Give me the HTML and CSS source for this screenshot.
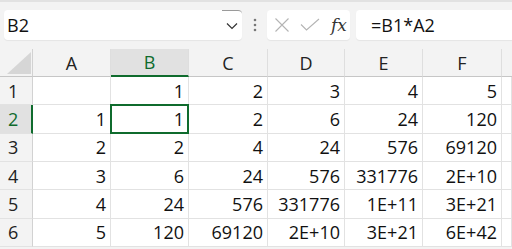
FILE: index.html
```html
<!DOCTYPE html>
<html lang="en">
<head>
  <meta charset="UTF-8" />
  <meta name="viewport" content="width=device-width, initial-scale=1.0"/>
  <title>Sheet</title>
  <link rel="stylesheet" href="styles.css">
</head>
<body>

  <div class="toolbar">
    <div class="namebox">
      <span class="name">B2</span>
      <span class="drop">
        <svg width="12" height="8" viewBox="0 0 12 8"><path d="M1 1.5 L6 6.5 L11 1.5" fill="none" stroke="#333" stroke-width="1.2"/></svg>
      </span>
    </div>
    <div class="dots">
      <svg width="4" height="14" viewBox="0 0 4 14"><circle cx="2" cy="2" r="1.3" fill="#777"/><circle cx="2" cy="7" r="1.3" fill="#777"/><circle cx="2" cy="12" r="1.3" fill="#777"/></svg>
    </div>
    <div class="funcs">
      <svg class="ico" width="16" height="16" viewBox="0 0 16 16"><path d="M1.5 1.5 L14.5 14.5 M14.5 1.5 L1.5 14.5" stroke="#b4b4b4" stroke-width="1.1"/></svg>
      <svg class="ico" width="20" height="14" viewBox="0 0 20 14"><path d="M1 6.5 L6.5 12 L19 1" fill="none" stroke="#b4b4b4" stroke-width="1.1"/></svg>
      <span class="fx">fx</span>
    </div>
    <div class="formula">=B1*A2</div>
  </div>

  <div class="grid">
    <div class="corner"><span class="tri"></span></div>
    <div class="colhead">A</div>
    <div class="colhead active">B</div>
    <div class="colhead">C</div>
    <div class="colhead">D</div>
    <div class="colhead">E</div>
    <div class="colhead">F</div>
    <div class="colhead last"></div>

    <div class="rowhead">1</div>
    <div class="cell"></div><div class="cell">1</div><div class="cell">2</div><div class="cell">3</div><div class="cell">4</div><div class="cell">5</div><div class="cell"></div>

    <div class="rowhead active">2</div>
    <div class="cell">1</div><div class="cell selected">1</div><div class="cell">2</div><div class="cell">6</div><div class="cell">24</div><div class="cell">120</div><div class="cell"></div>

    <div class="rowhead">3</div>
    <div class="cell">2</div><div class="cell">2</div><div class="cell">4</div><div class="cell">24</div><div class="cell">576</div><div class="cell">69120</div><div class="cell"></div>

    <div class="rowhead">4</div>
    <div class="cell">3</div><div class="cell">6</div><div class="cell">24</div><div class="cell">576</div><div class="cell">331776</div><div class="cell">2E+10</div><div class="cell"></div>

    <div class="rowhead">5</div>
    <div class="cell">4</div><div class="cell">24</div><div class="cell">576</div><div class="cell">331776</div><div class="cell">1E+11</div><div class="cell">3E+21</div><div class="cell"></div>

    <div class="rowhead">6</div>
    <div class="cell">5</div><div class="cell">120</div><div class="cell">69120</div><div class="cell">2E+10</div><div class="cell">3E+21</div><div class="cell">6E+42</div><div class="cell"></div>
  </div>

</body>
</html>
```

FILE: styles.css
```css
body {
  margin: 0;
  background-color: #f3f3f3;
  font-family: 'Open Sans', 'Noto Sans', sans-serif;
  color: #111;
  overflow: hidden;
}

.toolbar {
  display: flex;
  align-items: stretch;
  height: 30px;
  padding: 8px 0 9px 4px;
  border-top: 2px solid #e2e2e2;
}

.namebox {
  width: 238px;
  background-color: #fff;
  border-radius: 4px;
  display: flex;
  align-items: center;
  justify-content: space-between;
  box-shadow: 0 1px 1px rgba(0, 0, 0, 0.06);
}

.name {
  font-size: 18px;
  padding-left: 3px;
  color: #111;
}

.drop {
  width: 20px;
  height: 30px;
  border-top: 1px solid #9a9a9a;
  box-sizing: border-box;
  display: flex;
  align-items: center;
  justify-content: center;
  border-top-right-radius: 4px;
}

.dots {
  width: 25px;
  display: flex;
  align-items: center;
  justify-content: center;
}

.funcs {
  width: 83px;
  background-color: #fff;
  border-radius: 4px;
  display: flex;
  align-items: center;
  padding-left: 7px;
  box-sizing: border-box;
  gap: 10px;
  box-shadow: 0 1px 1px rgba(0, 0, 0, 0.06);
}

.fx {
  font-family: 'DejaVu Serif', 'Liberation Serif', serif;
  font-style: italic;
  font-size: 17px;
  color: #333;
  margin-left: 1px;
}

.formula {
  flex: 1;
  margin-left: 6px;
  background-color: #fff;
  border-radius: 4px 0 0 4px;
  font-size: 18px;
  display: flex;
  align-items: center;
  padding-left: 15px;
  box-shadow: 0 1px 1px rgba(0, 0, 0, 0.06);
}

.grid {
  display: grid;
  grid-template-columns: 33px 78px 78px 79px 77px 78px 79px 1fr;
  grid-template-rows: 28px repeat(6, 28.33px);
  background-color: #fff;
}

.corner {
  background-color: #f3f3f3;
  border-right: 1px solid #d2d2d2;
  border-bottom: 1px solid #c6c6c6;
  box-sizing: border-box;
  position: relative;
}

.tri {
  position: absolute;
  right: 1px;
  bottom: 2px;
  width: 0;
  height: 0;
  border-left: 24px solid transparent;
  border-bottom: 22px solid #d6d6d6;
}

.colhead {
  background-color: #f3f3f3;
  border-right: 1px solid #dedede;
  border-bottom: 1px solid #c6c6c6;
  box-sizing: border-box;
  display: flex;
  align-items: center;
  justify-content: center;
  font-size: 18px;
  color: #222;
}

.colhead.active {
  background-color: #e1e1e1;
  color: #0f6b2d;
  border-bottom: 2px solid #0f6b2d;
}

.colhead.last {
  border-right: none;
}

.rowhead {
  background-color: #f3f3f3;
  border-right: 1px solid #d2d2d2;
  border-bottom: 1px solid #e2e2e2;
  box-sizing: border-box;
  display: flex;
  align-items: center;
  padding-left: 8px;
  font-size: 18px;
  color: #222;
}

.rowhead.active {
  background-color: #e1e1e1;
  color: #0f6b2d;
  border-right: 2px solid #0f6b2d;
}

.cell {
  border-right: 1px solid #e2e2e2;
  border-bottom: 1px solid #e2e2e2;
  box-sizing: border-box;
  display: flex;
  align-items: center;
  justify-content: flex-end;
  padding-right: 4px;
  font-size: 18px;
  color: #111;
}

.cell.selected {
  border: 2px solid #0f6b2d;
  margin: -1px 0 0 -1px;
  padding-right: 3px;
}
```
